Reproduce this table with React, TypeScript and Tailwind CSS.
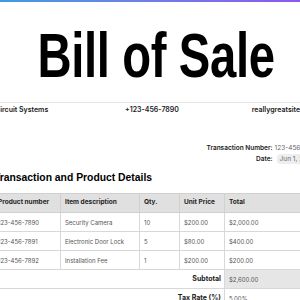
import React from 'react'

const items = [
  ['123-456-7890', 'Security Camera', '10', '$200.00', '$2,000.00'],
  ['123-456-7891', 'Electronic Door Lock', '5', '$80.00', '$400.00'],
  ['123-456-7892', 'Installation Fee', '1', '$200.00', '$200.00'],
]

const heads = ['Product number', 'Item description', 'Qty.', 'Unit Price', 'Total']

export default function App() {
  return (
    <div className="w-[300px] h-[300px] overflow-hidden bg-white font-['Inter',sans-serif] text-[#1a1a1a]">
      <div className="h-[2px] bg-gradient-to-r from-[#3d9be3] to-[#8a57ee]" />
      <div className="ml-[-7px] w-[326px]">
        {/* Title — condensed look via horizontal scale */}
        <div className="mt-[22px] flex justify-center">
          <h1 className="scale-x-[0.75] whitespace-nowrap font-['Liberation_Sans',sans-serif] text-[63px] leading-[62px] font-bold tracking-[-0.5px] text-black">
            Bill of Sale
          </h1>
        </div>

        {/* Company strip */}
        <div className="mt-[16px] border-t border-[#e6e6e6] pt-[2px] px-[2px] flex justify-between text-[7px] leading-[10px] font-semibold">
          <span>Circuit Systems</span>
          <span className="pl-[8px]">+123-456-7890</span>
          <span className="pl-[4px]">reallygreatsite.com</span>
        </div>

        {/* Transaction info */}
        <div className="mt-[28px] flex justify-end">
          <div className="grid grid-cols-[auto_auto] gap-x-[2px] gap-y-[1px] items-center text-[6.5px] leading-[10px]">
            <span className="text-right font-semibold">Transaction Number:</span>
            <span className="text-[#666]">123-456-7890</span>
            <span className="text-right font-semibold">Date:</span>
            <span className="ml-[2px] justify-self-start rounded-[3px] bg-[#eeeeee] px-[3px] text-[#666]">Jun 1, 2024</span>
          </div>
        </div>

        {/* Section heading */}
        <h2 className="mt-[6px] origin-left scale-x-[0.9] whitespace-nowrap px-[1px] font-['Liberation_Sans',sans-serif] text-[11.5px] leading-[14px] font-bold text-black">
          Transaction and Product Details
        </h2>

        {/* Table */}
        <table className="mt-[9px] w-full table-fixed border-collapse text-[6px]">
          <colgroup>
            <col className="w-[67px]" />
            <col className="w-[79px]" />
            <col className="w-[40px]" />
            <col className="w-[45px]" />
            <col />
          </colgroup>
          <thead>
            <tr className="bg-[#e0e0e0]">
              {heads.map((h) => (
                <th key={h} className="h-[19px] border border-[#d0d0d0] px-[4px] text-left text-[6.5px] font-bold text-[#1e1e1e]">
                  {h}
                </th>
              ))}
            </tr>
          </thead>
          <tbody>
            {items.map((r) => (
              <tr key={r[0]}>
                {r.map((c, i) => (
                  <td key={i} className="h-[19px] border border-[#d8d8d8] px-[4px] text-[#555]">
                    {c}
                  </td>
                ))}
              </tr>
            ))}
            <tr>
              <td colSpan={4} className="h-[19px] border-y border-[#d8d8d8] px-[3px] text-right text-[7px] font-bold text-[#222]">
                Subtotal
              </td>
              <td className="h-[19px] border border-[#d8d8d8] bg-[#e6e6e6] px-[4px] text-[#555]">$2,600.00</td>
            </tr>
            <tr>
              <td colSpan={4} className="h-[19px] border-y border-[#d8d8d8] px-[3px] text-right text-[7px] font-bold text-[#222]">
                Tax Rate (%)
              </td>
              <td className="h-[19px] border border-[#d8d8d8] px-[4px] text-[#555]">5.00%</td>
            </tr>
          </tbody>
        </table>
      </div>
    </div>
  )
}
